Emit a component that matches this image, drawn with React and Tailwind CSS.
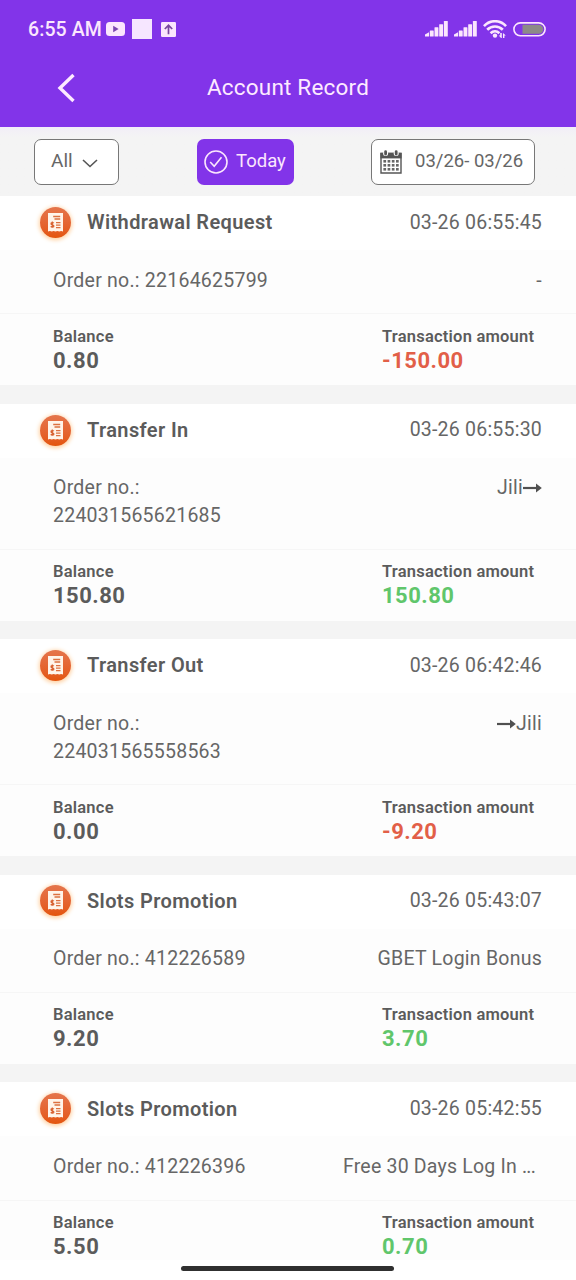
const RECORDS = [
  { title: "Withdrawal Request", time: "03-26 06:55:45", order: "22164625799", note: "-", balance: "0.80", amount: "-150.00" },
  { title: "Transfer In", time: "03-26 06:55:30", order: "224031565621685", note: "Jili", arrow: "after", balance: "150.80", amount: "150.80" },
  { title: "Transfer Out", time: "03-26 06:42:46", order: "224031565558563", note: "Jili", arrow: "before", balance: "0.00", amount: "-9.20" },
  { title: "Slots Promotion", time: "03-26 05:43:07", order: "412226589", note: "GBET Login Bonus", balance: "9.20", amount: "3.70" },
  { title: "Slots Promotion", time: "03-26 05:42:55", order: "412226396", note: "Free 30 Days Log In ", clipped: true, balance: "5.50", amount: "0.70" },
];

function Signal() {
  return (
    <svg width="23" height="16" viewBox="0 0 23 16" fill="#fbe6fd">
      <path d="M0 15.500v-2l4-2.200v4.200z" />
      <rect x="4.8" y="9.5" width="3.9" height="6" rx="0.5" />
      <rect x="9.5" y="6.3" width="3.9" height="9.2" rx="0.5" />
      <rect x="14.2" y="3.2" width="3.9" height="12.3" rx="0.5" />
      <rect x="18.9" y="0" width="3.9" height="15.5" rx="0.5" />
    </svg>
  );
}

function StatusBar() {
  return (
    <div className="flex h-[58px] items-center pl-[28px] pr-[30px] text-[#fbe6fd]">
      <span className="w-[77px] whitespace-nowrap pt-0.5 text-[19.5px] font-medium tracking-[0.1px]">6:55 AM</span>
      <svg className="ml-px" width="19" height="14" viewBox="0 0 19 14">
        <rect width="19" height="14" rx="3.5" fill="#fbe6fd" />
        <path d="M7.2 3.8v6.4L12.6 7z" fill="#7b45b0" />
      </svg>
      <div className="ml-[7px] size-[20px] bg-[#f6e6ff]" />
      <svg className="ml-[9px]" width="15" height="15" viewBox="0 0 15 15">
        <rect width="15" height="15" rx="1.2" fill="#fbe6fd" />
        <path d="M7.5 12.2V3.5M3.8 7l3.7-3.7L11.2 7" fill="none" stroke="#79469f" strokeWidth="1.7" />
      </svg>
      <div className="ml-auto flex items-center">
        <Signal />
        <div className="w-1.5" />
        <Signal />
        <svg className="ml-[6px]" width="24" height="19" viewBox="0 0 24 19" fill="none" stroke="#fbe6fd" strokeWidth="2.7">
          <path d="M.9 6.2C7-.4 17-.4 23.1 6.2" />
          <path d="M4.2 9.8c4.3-4.4 11.3-4.4 15.6 0" />
          <path d="M7.6 13.2c2.6-2.4 6.2-2.4 8.8 0" />
          <circle cx="12" cy="15.6" r="2.2" fill="#fbe6fd" stroke="none" />
          <path d="M18 18l-2.3-2.6h1.5V13h1.6v5zM20 13l2.8 2.6h-1.4V18H20z" fill="#fbe6fd" stroke="none" />
        </svg>
        <svg className="ml-[6px]" width="33" height="15" viewBox="0 0 33 15">
          <rect x="0.9" y="0.9" width="31.2" height="12.8" rx="6.4" fill="none" stroke="#fbe6fd" strokeWidth="1.6" />
          <path d="M9.5 2.800h16.300a4.500 4.500 0 0 1 0 9H9.500z" fill="#8d8a88" />
        </svg>
      </div>
    </div>
  );
}

function CalendarIcon() {
  return (
    <svg width="22" height="24" viewBox="0 0 22 24">
      <path d="M1 3.500h20V23H1z" fill="#fff" stroke="#555" strokeWidth="1.4" />
      <path d="M.4 2.800h21.200V8.400H.4z" fill="#555" />
      {[5.6, 16.2].map((x) => (
        <g key={x}>
          <circle cx={x} cy="3.4" r="2.5" fill="#fff" />
          <rect x={x - 1.4} y="0.3" width="2.8" height="5.2" rx="1.4" fill="#555" />
        </g>
      ))}
      {[10, 14, 18].map((y) =>
        [3.4, 7.6, 11.8, 16].map((x) => <rect key={`${x}-${y}`} x={x} y={y} width="2.7" height="2.6" fill="#666" />)
      )}
    </svg>
  );
}

function RecordIcon() {
  return (
    <div className="flex size-[31px] items-center justify-center rounded-full bg-linear-to-b from-[#e5754b] to-[#e45509] shadow-[0_1px_4px_1px_#ffd0a0]">
      <svg width="15" height="19" viewBox="0 0 15 19">
        <path d="M0 0h15v18.600l-1.900-.6-1.800.6-1.900-.6-1.900.6-1.900-.6-1.800.6-1.900-.6-1.900.6z" fill="#fff4ea" />
        <path d="M5.200 3.500h7M6.500 6h5.700M8 9.600h4.500M8 12.100h4.500M8 14.600h4.500" stroke="#dc7040" strokeWidth="1.300" />
        <path d="M5.800 10.200c-.7-.9-3-.7-2.800.6.2 1.300 2.900.8 2.900 2.200 0 1.300-2.400 1.500-3.200.4M4.300 8.600v6.200" fill="none" stroke="#d8602f" strokeWidth="1.200" />
      </svg>
    </div>
  );
}

function Arrow() {
  return (
    <svg width="19" height="12" viewBox="0 0 19 12">
      <path d="M0 6h14" stroke="#505050" strokeWidth="2.2" />
      <path d="M13 1.500L18.800 6L13 10.500z" fill="#505050" />
    </svg>
  );
}

function Record({ record }) {
  const long = record.order.length > 12;
  const negative = record.amount.startsWith("-");
  return (
    <article className="mb-[18.7px] shrink-0 bg-[#fdfdfd]">
      <div className="flex h-[54px] items-center bg-white pl-10 pr-[34px] pb-[1.5px]">
        <RecordIcon />
        <h2 className="ml-4 text-[20px] font-semibold tracking-[0.38px] text-[#5b5b5b]">{record.title}</h2>
        <time className="ml-auto text-[19.5px] tracking-[0.22px]">{record.time}</time>
      </div>
      <div className="flex items-start justify-between border-b border-[#f6f6f6] pl-[53px] pr-[34px] pt-[16.700px] pb-[18.700px] text-[19.5px] leading-[27.700px] tracking-[0.24px]">
        <p className={long ? "w-[200px]" : "whitespace-nowrap"}>Order no.: {record.order}</p>
        <p className={record.clipped ? "whitespace-pre pr-[7px] tracking-[0.2px]" : "flex items-center whitespace-nowrap"}>
          {record.arrow === "before" && <Arrow />}
          {record.note}
          {record.clipped && <span className="tracking-[-0.8px]">...</span>}
          {record.arrow === "after" && <Arrow />}
        </p>
      </div>
      <div className="grid h-[71px] grid-cols-[329px_1fr] pl-[53px] pt-[11.700px] font-bold text-[#5b5b5b]">
        <div>
          <p className="text-[16.5px] font-semibold leading-[22px] tracking-[0.22px]">Balance</p>
          <p className="text-[22px] leading-[25px] tracking-[0.5px]">{record.balance}</p>
        </div>
        <div>
          <p className="whitespace-nowrap text-[16.5px] font-semibold leading-[22px] tracking-[0.22px]">Transaction amount</p>
          <p className={negative ? "text-[22px] leading-[25px] tracking-[0.5px] text-[#e25f48]" : "text-[22px] leading-[25px] tracking-[0.5px] text-[#60c66b]"}>{record.amount}</p>
        </div>
      </div>
    </article>
  );
}

export default function App() {
  return (
    <div className="flex h-[1280px] w-[576px] flex-col overflow-hidden bg-[#f4f4f4] font-[Roboto,sans-serif] text-[#666]">
      <header className="h-[127px] shrink-0 bg-[#8234e9]">
        <StatusBar />
        <div className="grid h-[60px] grid-cols-[1fr_auto_1fr] items-center text-[#fdeaff]">
          <svg className="ml-[57px]" width="19" height="30" viewBox="0 0 19 30" fill="none" stroke="currentColor" strokeWidth="3.4">
            <path d="M16.500 2L3 15l13.500 13" />
          </svg>
          <h1 className="text-[22.5px] tracking-[0.2px]">Account Record</h1>
        </div>
      </header>
      <div className="flex h-[69px] shrink-0 items-center justify-between bg-linear-to-b from-[#f2eef8] to-[#f4f4f4] to-15% pl-[34px] pr-[41px]">
        <button className="flex h-[46px] w-[85px] items-center rounded-[7px] border border-[#777] bg-white pl-4 text-[19px]">
          All
          <svg className="ml-[9px] mt-1" width="16" height="9" viewBox="0 0 16 9" fill="none" stroke="#555" strokeWidth="1.6">
            <path d="M1 1l7 6.500L15 1" />
          </svg>
        </button>
        <button className="flex h-[46px] w-[97px] items-center rounded-[7px] bg-[#8234e9] pl-[7px] text-[18.5px] text-[#fbe6fd]">
          <svg className="shrink-0" width="24" height="24" viewBox="0 0 24 24" fill="none" stroke="currentColor" strokeWidth="1.6">
            <circle cx="12" cy="12" r="11" />
            <path d="M6.200 12l4 4.200 7.300-9" />
          </svg>
          <span className="ml-[8.500px] pt-px">Today</span>
        </button>
        <button className="flex h-[46px] w-[164px] items-center rounded-[7px] border border-[#777] bg-white pl-[8px] text-[18.5px]">
          <CalendarIcon />
          <span className="ml-[13px] whitespace-nowrap pt-px">03/26- 03/26</span>
        </button>
      </div>
      <main className="flex h-[1064px] shrink-0 flex-col overflow-hidden">
        {RECORDS.map((r) => (
          <Record key={r.order} record={r} />
        ))}
      </main>
      <footer className="flex h-5 shrink-0 justify-center bg-white pr-px pt-[6px]">
        <div className="h-[5px] w-[213px] rounded-full bg-[#303030]" />
      </footer>
    </div>
  );
}
